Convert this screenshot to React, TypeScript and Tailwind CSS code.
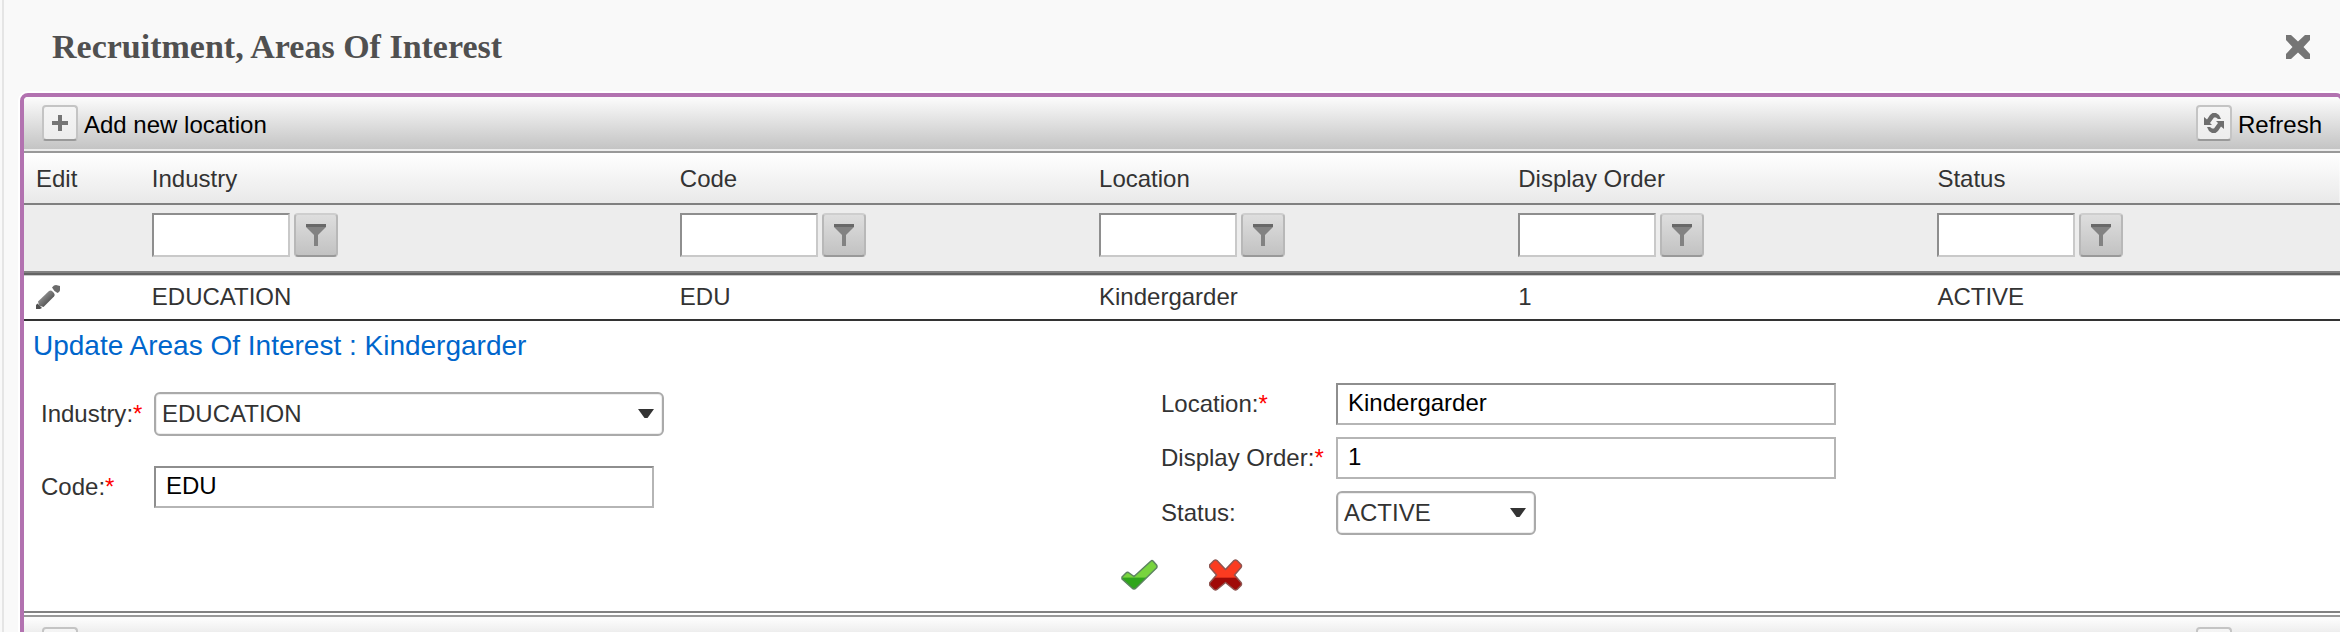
import { useState, type ReactNode } from "react";

const columns = ["Industry", "Code", "Location", "Display Order", "Status"];
const record = ["EDUCATION", "EDU", "Kindergarder", "1", "ACTIVE"];

function CloseIcon() {
  return (
    <svg viewBox="0 0 24 24" className="h-6 w-6" aria-hidden>
      <path
        d="M0 0h5l7 6.5L19 0h5v5l-6.5 7 6.5 7v5h-5l-7-6.5L5 24H0v-5l6.5-7L0 5z"
        fill="#757575"
      />
    </svg>
  );
}

function PlusIcon() {
  return (
    <svg viewBox="0 0 16 16" className="h-4 w-4" aria-hidden>
      <path d="M6 0h4v6h6v4h-6v6H6v-6H0V6h6z" fill="#757575" />
    </svg>
  );
}

function RefreshIcon() {
  return (
    <svg viewBox="0 0 20 20" className="h-5 w-5" aria-hidden>
      <path d="M0 4v8h8L6 10l4-5.500h2L14 6h3l-2-4-3-2H8.500L6 2 3 6.500z" fill="#6e6e6e" />
      <path d="M20 16V8h-8l2 2-4 5.500H8L6 14H3l2 4 3 2h3.500l2.500-2 3-4.500z" fill="#6e6e6e" />
    </svg>
  );
}

function FunnelIcon() {
  return (
    <svg viewBox="0 0 20 22" className="h-[22px] w-5" aria-hidden>
      <path d="M0 0h20v3l-8 8v11H8V11L0 3z" fill="#828282" />
      <path d="M0 0h20v3H0z" fill="#686868" />
    </svg>
  );
}

function PencilIcon() {
  return (
    <svg viewBox="0 0 24 24" className="h-6 w-6" aria-hidden>
      <defs>
        <linearGradient id="pencil" x1="0" y1="0" x2="1" y2="1">
          <stop offset="0.3" stopColor="#8c8c8c" />
          <stop offset="0.65" stopColor="#5c5c5c" />
        </linearGradient>
      </defs>
      <path d="M2 16.5 13 6q2-1 3.500.500L18 8q1.500 2 0 3.500L7.500 22 3 20.500z" fill="url(#pencil)" />
      <path d="M16 2.500 18 .500Q19 0 20 0l4 1v4q0 1-1 2l-1.500 1Q18 6.500 16 2.500z" fill="#6b6b6b" />
      <path d="M0 24v-4l1.500-1.500L6 23l-2 1z" fill="#505050" />
    </svg>
  );
}

function CheckIcon() {
  return (
    <svg viewBox="0 -1 40 32" className="h-8 w-10" aria-hidden>
      <defs>
        <linearGradient id="check" x1="0" y1="0" x2="0" y2="1">
          <stop offset="0.58" stopColor="#78d43e" />
          <stop offset="0.62" stopColor="#2fa51c" />
        </linearGradient>
      </defs>
      <path
        d="m1 17 4-4q1-1 2.500-.500l5.500 4L30 1q1-1 2 0l3.500 4q1 1.500 0 3L15 28q-2 2-4 0L1 19z"
        fill="url(#check)"
        stroke="#5c8460"
        strokeWidth="1.5"
        strokeLinejoin="round"
      />
    </svg>
  );
}

function CancelIcon() {
  return (
    <svg viewBox="0 0 34 32" className="h-8 w-[34px]" aria-hidden>
      <defs>
        <linearGradient id="cancel" x1="0" y1="0" x2="0" y2="1">
          <stop offset="0.57" stopColor="#fb3b20" />
          <stop offset="0.61" stopColor="#a00a08" />
        </linearGradient>
      </defs>
      <path
        d="M5 1.500q1.500-1 3 0l8.500 9 8.500-9q1.500-1 3 0l4 4q1 1.500 0 3L25.500 16l6.500 7.500q1 1.500 0 3l-4 4q-1.500 1-3 0l-8.500-7-8.500 7q-1.500 1-3 0l-4-4q-1-1.500 0-3L7.500 16 1 8.500q-1-1.500 0-3z"
        fill="url(#cancel)"
        stroke="#8e5450"
        strokeWidth="1.5"
        strokeLinejoin="round"
      />
    </svg>
  );
}

interface ToolbarButtonProps {
  icon: ReactNode;
  label: string;
}

function ToolbarButton({ icon, label }: ToolbarButtonProps) {
  return (
    <button type="button" className="flex items-center gap-1.5 text-black">
      <span className="flex h-9 w-9 items-center justify-center rounded border-2 border-[#c4c4c4] border-b-[#999] bg-linear-to-b from-[#f5f5f5] to-[#ededed]">
        {icon}
      </span>
      <span className="pt-1">{label}</span>
    </button>
  );
}

function CommandBar() {
  return (
    <div className="flex justify-between border-b-2 border-[#ececec] bg-linear-to-b from-[#fcfcfc] to-[#c4c4c4] px-[18px] py-2">
      <ToolbarButton icon={<PlusIcon />} label="Add new location" />
      <ToolbarButton icon={<RefreshIcon />} label="Refresh" />
    </div>
  );
}

interface FieldProps {
  id: string;
  label: string;
  required?: boolean;
  labelClass: string;
  children: ReactNode;
}

function Field({ id, label, required, labelClass, children }: FieldProps) {
  return (
    <div className="flex items-center">
      <label htmlFor={id} className={labelClass}>
        {label}:{required && <span className="text-[#f00]">*</span>}
      </label>
      {children}
    </div>
  );
}

interface SelectProps {
  id: string;
  options: string[];
  widthClass: string;
}

function Select({ id, options, widthClass }: SelectProps) {
  return (
    <div className={`relative ${widthClass}`}>
      <select
        id={id}
        className="h-11 w-full appearance-none rounded-md border-2 border-[#aaa] bg-white pr-10 pl-1.5 shadow-[inset_0_0_0_1px_#eee]"
      >
        {options.map((option) => (
          <option key={option}>{option}</option>
        ))}
      </select>
      <svg
        viewBox="0 0 16 10"
        className="pointer-events-none absolute top-[17px] right-2.5 h-2.5 w-4"
        aria-hidden
      >
        <path d="M0 0h16L9.500 9h-3z" fill="#333" />
      </svg>
    </div>
  );
}

const inputClass =
  "h-[42px] w-[500px] border-2 bg-white px-2.5 pb-0.5 text-black outline-none";

export default function App() {
  const [code, setCode] = useState("EDU");
  const [location, setLocation] = useState("Kindergarder");
  const [order, setOrder] = useState("1");

  return (
    <div className="h-screen overflow-hidden bg-[#f9f9f9] pl-0.5 font-['Liberation_Sans',Arial,sans-serif] text-2xl leading-7 text-[#333]">
      <div className="min-h-full border-l-2 border-[#e5e5e5] pl-4">
        <header className="flex items-center justify-between pt-[27px] pr-[30px] pb-[26px] pl-8">
          <h1 className="font-['Liberation_Serif','Times_New_Roman',serif] text-[34px] leading-10 font-bold text-[#505050]">
            Recruitment, Areas Of Interest
          </h1>
          <button type="button" aria-label="Close">
            <CloseIcon />
          </button>
        </header>

        <main className="-mr-1 overflow-hidden rounded-lg border-4 border-[#b272b0] bg-white shadow-[0_0_0_2px_#fff]">
          <CommandBar />

          <table className="w-full table-fixed border-separate border-spacing-0 border-t-2 border-[#999] text-left">
            <colgroup>
              <col className="w-[5%]" />
              <col className="w-[22.8%]" />
              <col className="w-[18.1%]" />
              <col className="w-[18.1%]" />
              <col className="w-[18.1%]" />
              <col />
            </colgroup>
            <thead>
              <tr className="bg-linear-to-b from-white to-[#e8e8e8]">
                {["Edit", ...columns].map((name) => (
                  <th
                    key={name}
                    className="h-[52px] border-b-2 border-[#808080] pt-0.5 pl-3 font-normal"
                  >
                    {name}
                  </th>
                ))}
              </tr>
              <tr className="bg-[#ededed]">
                <td className="border-b-2 border-[#828282]" />
                {columns.map((name) => (
                  <td key={name} className="border-b-2 border-[#828282] pt-2 pb-3.5 pl-3">
                    <div className="flex gap-1">
                      <input
                        type="text"
                        aria-label={`Filter ${name}`}
                        className="h-11 w-[138px] border-2 border-t-[#8e8e8e] border-r-[#c9c9c9] border-b-[#c9c9c9] border-l-[#8e8e8e] bg-white px-2"
                      />
                      <button
                        type="button"
                        aria-label={`Apply ${name} filter`}
                        className="flex h-11 w-11 items-center justify-center rounded border-2 border-[#b8b8b8] border-t-[#cecece] border-b-[#999] bg-linear-to-b from-[#dedede] to-[#c2c2c2]"
                      >
                        <FunnelIcon />
                      </button>
                    </div>
                  </td>
                ))}
              </tr>
            </thead>
            <tbody>
              <tr>
                <td className="h-12 border-y-2 border-t-[#646464] border-b-[#333] pl-3 shadow-[inset_0_1px_0_#ccc]">
                  <button type="button" aria-label="Edit" className="block">
                    <PencilIcon />
                  </button>
                </td>
                {record.map((value) => (
                  <td
                    key={value}
                    className="h-12 border-y-2 border-t-[#646464] border-b-[#333] pl-3 shadow-[inset_0_1px_0_#ccc]"
                  >
                    {value}
                  </td>
                ))}
              </tr>
            </tbody>
          </table>

          <form className="pt-2 pb-5" onSubmit={(e) => e.preventDefault()}>
            <h2 className="pl-[9px] text-[28px] leading-[34px] text-[#0066cc]">
              Update Areas Of Interest : Kindergarder
            </h2>
            <div className="grid grid-cols-2 pt-5 pr-[59px] pl-[17px]">
              <div className="flex flex-col gap-[30px] pt-[9px]">
                <Field id="industry" label="Industry" required labelClass="w-[113px]">
                  <Select id="industry" options={["EDUCATION"]} widthClass="w-[510px]" />
                </Field>
                <Field id="code" label="Code" required labelClass="w-[113px]">
                  <input
                    id="code"
                    type="text"
                    value={code}
                    onChange={(e) => setCode(e.target.value)}
                    className={`${inputClass} border-t-[#8e8e8e] border-r-[#b5b5b5] border-b-[#b5b5b5] border-l-[#8e8e8e]`}
                  />
                </Field>
              </div>
              <div className="flex flex-col gap-3">
                <Field id="location" label="Location" required labelClass="w-[175px]">
                  <input
                    id="location"
                    type="text"
                    value={location}
                    onChange={(e) => setLocation(e.target.value)}
                    className={`${inputClass} border-t-[#8e8e8e] border-r-[#b5b5b5] border-b-[#b5b5b5] border-l-[#8e8e8e]`}
                  />
                </Field>
                <Field id="order" label="Display Order" required labelClass="w-[175px]">
                  <input
                    id="order"
                    type="text"
                    value={order}
                    onChange={(e) => setOrder(e.target.value)}
                    className={`${inputClass} border-[#b5b5b5]`}
                  />
                </Field>
                <Field id="status" label="Status" labelClass="w-[175px]">
                  <Select id="status" options={["ACTIVE", "INACTIVE"]} widthClass="w-[200px]" />
                </Field>
              </div>
            </div>
            <div className="flex justify-center gap-12 pt-6">
              <button type="submit" aria-label="Update">
                <CheckIcon />
              </button>
              <button type="button" aria-label="Cancel">
                <CancelIcon />
              </button>
            </div>
          </form>

          <footer className="border-t-2 border-[#828282] pt-0.5">
            <div className="border-t-2 border-[#999] bg-[#fcfcfc] pt-0.5">
              <CommandBar />
            </div>
          </footer>
        </main>
      </div>
    </div>
  );
}
